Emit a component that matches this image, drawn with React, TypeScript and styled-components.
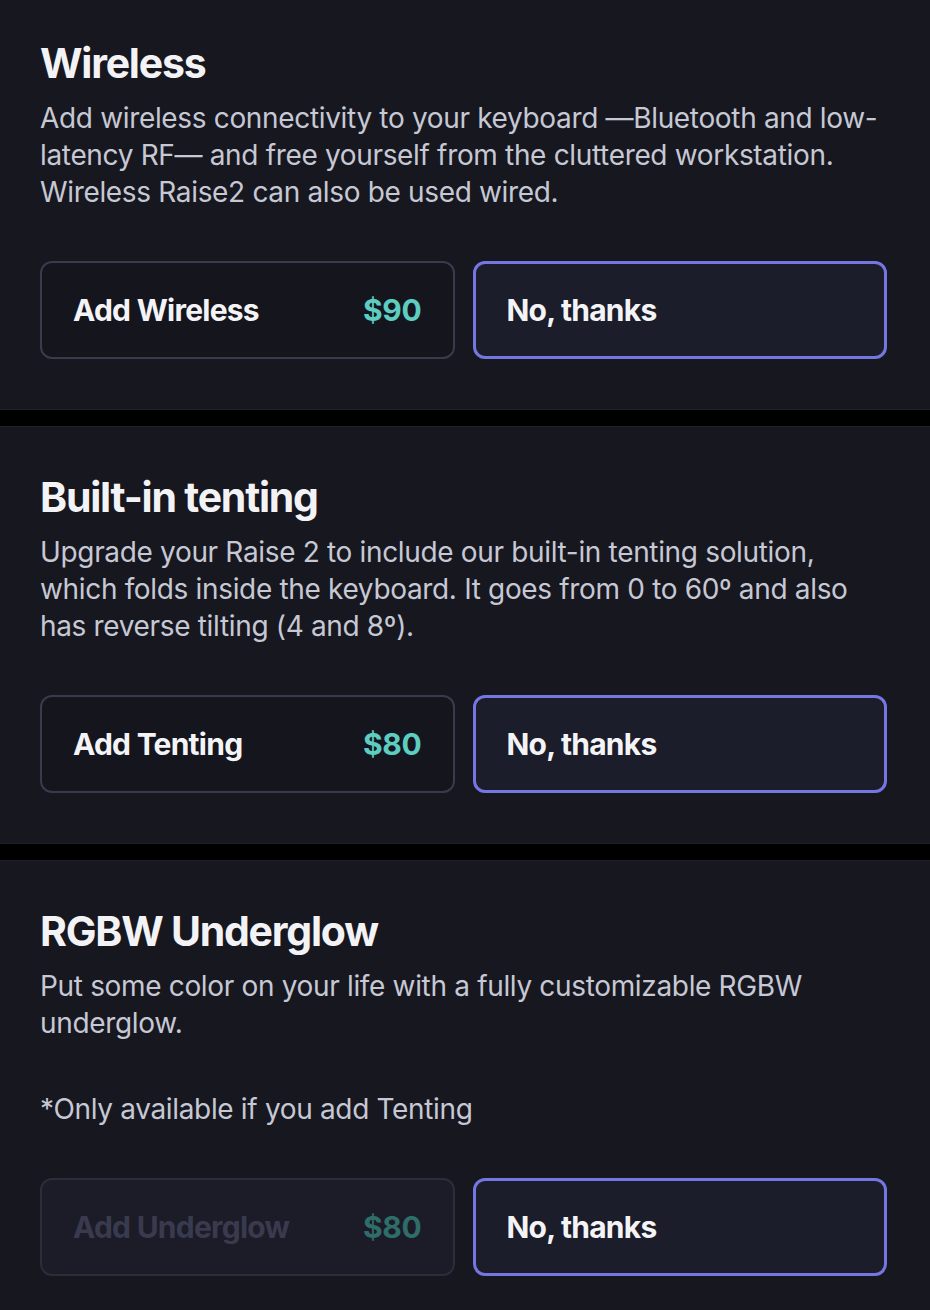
import React from "react";
import styled, { createGlobalStyle } from "styled-components";

const Global = createGlobalStyle`
  html, body { margin: 0; padding: 0; background: #000; }
  body { font-family: Inter, "Noto Sans", sans-serif; -webkit-font-smoothing: antialiased; }
`;

const Page = styled.div`
  display: flex;
  flex-direction: column;
  gap: 16px;
  background: #000;
  min-height: 1310px;
`;

const Section = styled.section<{ $top: number }>`
  background: #171720;
  border-top: 1px solid #1f1f2a;
  border-bottom: 1px solid #1f1f2a;
  padding: ${(p) => p.$top}px 43px 50px 40px;
  &:first-child { border-top: none; }
  &:last-child { border-bottom: none; flex: 1; }
`;

const Title = styled.h2`
  margin: 0 0 12px;
  font-size: 41px;
  line-height: 50px;
  font-weight: 700;
  letter-spacing: -0.03em;
  color: #f3f3f6;
`;

const Desc = styled.p`
  margin: 0;
  font-size: 28px;
  line-height: 37px;
  font-weight: 400;
  letter-spacing: -0.012em;
  color: #c6c8d4;
`;

const Note = styled(Desc)`
  margin-top: 49px;
`;

const Options = styled.div`
  display: grid;
  grid-template-columns: 1fr 1fr;
  gap: 18px;
  margin-top: 50px;
`;

const Option = styled.button<{ $selected?: boolean; $disabled?: boolean }>`
  display: flex;
  align-items: center;
  justify-content: space-between;
  height: 98px;
  box-sizing: border-box;
  padding: 0 31px 0 31px;
  border-radius: 12px;
  font-family: inherit;
  font-size: 30px;
  font-weight: 700;
  letter-spacing: -0.025em;
  text-align: left;
  cursor: pointer;
  background: ${(p) => (p.$selected ? "#1c1d2a" : p.$disabled ? "#1b1c27" : "#15151e")};
  border: ${(p) => (p.$selected ? "3px solid #7676e2" : "2px solid " + (p.$disabled ? "#2c2c3b" : "#3a3a4c"))};
  color: ${(p) => (p.$disabled ? "#393a4e" : "#f4f4f7")};
`;

const Price = styled.span<{ $disabled?: boolean }>`
  color: ${(p) => (p.$disabled ? "#2f6d69" : "#5ccdc0")};
  letter-spacing: -0.01em;
`;

type Item = {
  title: string;
  desc: string;
  note?: string;
  label: string;
  price: string;
  disabled?: boolean;
  top: number;
};

const items: Item[] = [
  {
    title: "Wireless",
    desc: "Add wireless connectivity to your keyboard —Bluetooth and low-latency RF— and free yourself from the cluttered workstation. Wireless Raise2 can also be used wired.",
    label: "Add Wireless",
    price: "$90",
    top: 38,
  },
  {
    title: "Built-in tenting",
    desc: "Upgrade your Raise 2 to include our built-in tenting solution, which folds inside the keyboard. It goes from 0 to 60º and also has reverse tilting (4 and 8º).",
    label: "Add Tenting",
    price: "$80",
    top: 45,
  },
  {
    title: "RGBW Underglow",
    desc: "Put some color on your life with a fully customizable RGBW underglow.",
    note: "*Only available if you add Tenting",
    label: "Add Underglow",
    price: "$80",
    disabled: true,
    top: 45,
  },
];

export default function App() {
  return (
    <>
      <Global />
      <Page>
        {items.map((it) => (
          <Section key={it.title} $top={it.top}>
            <Title>{it.title}</Title>
            <Desc>{it.desc}</Desc>
            {it.note && <Note>{it.note}</Note>}
            <Options>
              <Option $disabled={it.disabled}>
                <span>{it.label}</span>
                <Price $disabled={it.disabled}>{it.price}</Price>
              </Option>
              <Option $selected>
                <span>No, thanks</span>
              </Option>
            </Options>
          </Section>
        ))}
      </Page>
    </>
  );
}
